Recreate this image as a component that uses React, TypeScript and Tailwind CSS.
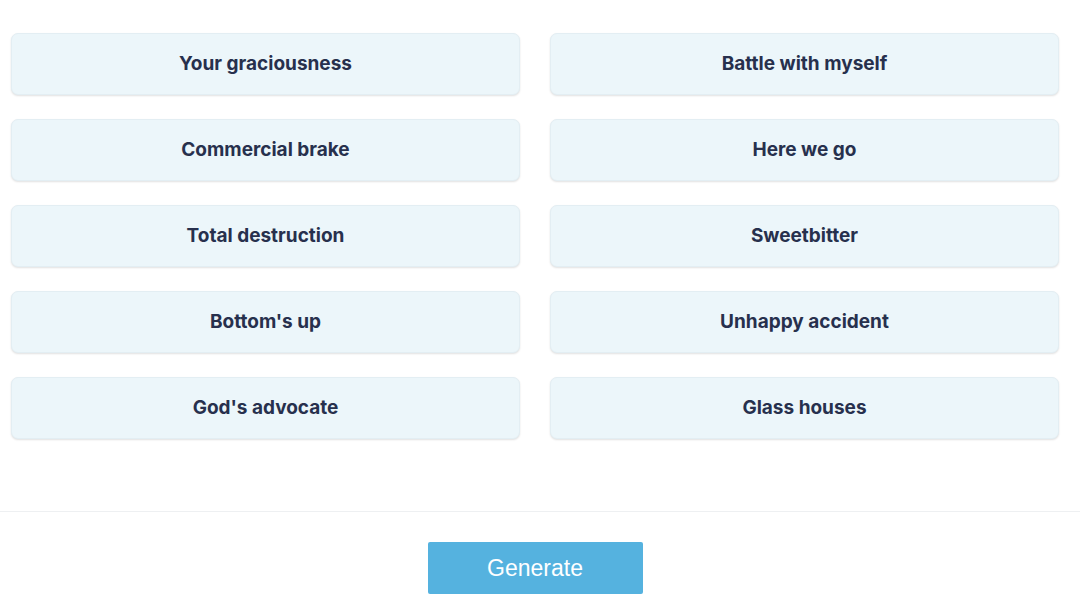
import React from "react";

const items = [
  "Your graciousness",
  "Battle with myself",
  "Commercial brake",
  "Here we go",
  "Total destruction",
  "Sweetbitter",
  "Bottom's up",
  "Unhappy accident",
  "God's advocate",
  "Glass houses",
];

export default function App() {
  return (
    <div className="w-[1080px] h-[616px] bg-white overflow-hidden" style={{ fontFamily: "Inter, 'Noto Sans', sans-serif" }}>
      <div className="pl-[11px] pr-[21px] pt-[33px] grid grid-cols-2 gap-x-[30px] gap-y-[24px]">
        {items.map((t) => (
          <div
            key={t}
            className="h-[62px] rounded-[7px] bg-[#ecf6fa] border border-[#e3eef3] shadow-[0_1px_2px_rgba(0,0,0,0.12)] flex items-center justify-center text-[19px] font-bold text-[#27304d]"
          >
            {t}
          </div>
        ))}
      </div>
      <div className="mt-[72px] border-t border-[#eef0f2]" />
      <div className="flex justify-center pl-[11px] pr-[21px] pt-[30px]">
        <button
          className="w-[215px] h-[52px] bg-[#55b2df] rounded-[2px] text-white text-[23px]"
          style={{ fontFamily: "'Liberation Sans', Arial, sans-serif" }}
        >
          Generate
        </button>
      </div>
    </div>
  );
}
